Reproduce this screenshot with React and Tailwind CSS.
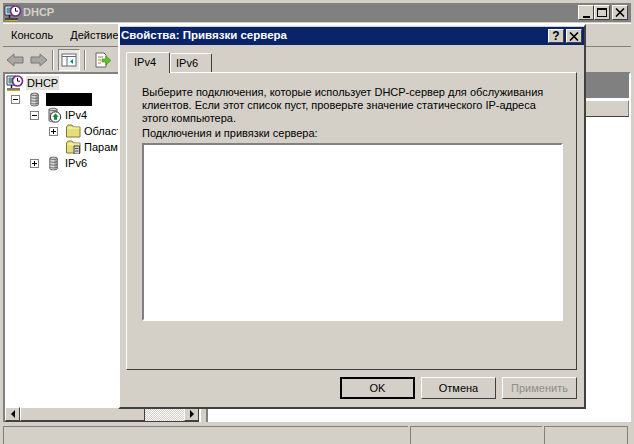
import React from 'react'

const raised = 'border border-t-white border-l-white border-r-[#404040] border-b-[#404040] bg-[#d4d0c8]'
const sunken = 'border-2 border-t-[#808080] border-l-[#808080] border-r-white border-b-white'

function ClockIcon({ className }) {
  return (
    <svg viewBox="0 0 18 16" className={className}>
      <path d="M1 1h9v9H1z" fill="#fff" stroke="#333" />
      <path d="M2.500 2.500h6v6h-6z" fill="#4f83cf" />
      <path d="M3 5l2-2 2 3-2 2z" fill="#55b06a" />
      <path d="M5.500 10v3" stroke="#222" strokeWidth="1.6" />
      <path d="M1 14h13" stroke="#222" strokeWidth="1.2" />
      <path d="M1 15.500h13" stroke="#c8b000" />
      <circle cx="11.500" cy="6" r="5" fill="#fff" stroke="#7a2a90" strokeWidth="1.7" />
      <path d="M11.500 3v3.200h2.500" fill="none" stroke="#111" />
    </svg>
  )
}

function ServerIcon({ badge, className }) {
  return (
    <svg viewBox="0 0 16 16" className={className}>
      <path d="M3 2.500C3 .8 11 .8 11 2.500v11c0 1.700-8 1.700-8 0z" fill="#d8d8d8" stroke="#5a5a5a" />
      <path d="M3 2.500c0 1.500 8 1.500 8 0" fill="none" stroke="#5a5a5a" />
      <path d="M3.500 6c2 1 5 1 7 0M3.500 9c2 1 5 1 7 0M3.500 12c2 1 5 1 7 0" fill="none" stroke="#6a6a6a" />
      <path d="M8 4h2.500v9.500H8z" fill="#000" opacity="0.22" />
      {badge && (
        <>
          <circle cx="9.500" cy="10" r="5.200" fill="#fff" stroke="#333" />
          <path d="M9.500 6.600l3.200 3.200H11v3H8v-3H6.300z" fill="#0b8a2e" />
        </>
      )}
    </svg>
  )
}

function FolderIcon({ server, className }) {
  return (
    <svg viewBox="0 0 16 14" className={className}>
      <path d="M1.500 3L3 1h4l1.500 2h6.500v10h-13.500z" fill="#e6df78" stroke="#7d7a3c" />
      <path d="M2.500 4h12" stroke="#fdf8c0" />
      {server && (
        <>
          <path d="M9 6h5.500v8H9z" fill="#d8d8d8" stroke="#444" />
          <path d="M10 8.500h3.500M10 11h3.500" stroke="#555" />
        </>
      )}
    </svg>
  )
}

function Expander({ sign }) {
  return (
    <span className="relative block h-[9px] w-[9px] border border-[#808080] bg-white">
      <span className="absolute left-[1px] top-[3px] h-[1px] w-[5px] bg-black" />
      {sign === '+' && <span className="absolute left-[3px] top-[1px] h-[5px] w-[1px] bg-black" />}
    </span>
  )
}

function TreeRow({ indent, sign, icon, children }) {
  return (
    <div className="flex h-4 items-center" style={{ paddingLeft: indent }}>
      <span className="flex w-[13px] shrink-0 justify-start">{sign && <Expander sign={sign} />}</span>
      <span className="mx-[3px] flex w-4 shrink-0 justify-center">{icon}</span>
      <span className="whitespace-nowrap">{children}</span>
    </div>
  )
}

function CloseGlyph() {
  return (
    <svg viewBox="0 0 10 9" className="h-[9px] w-[10px]">
      <path d="M1 0.500l8 8M9 0.500l-8 8" stroke="#000" strokeWidth="1.600" />
    </svg>
  )
}

function CaptionButton({ children, className }) {
  return (
    <span className={`${raised} grid place-items-center text-[12px] font-bold leading-none text-black ${className}`}>
      {children}
    </span>
  )
}

function DialogButton({ children, disabled, def }) {
  return (
    <button
      className={`flex h-[22px] w-[75px] items-center justify-center bg-[#d4d0c8] text-[11px] ${def ? 'border-2 border-black' : raised} ${disabled ? 'text-[#8f8d88]' : 'text-black'}`}
    >
      {children}
    </button>
  )
}

function ScrollArrow({ dir }) {
  return (
    <span className={`${raised} grid h-[14px] w-[15px] shrink-0 place-items-center`}>
      <svg viewBox="0 0 6 8" className="h-2 w-[6px]">
        <path d={dir === 'left' ? 'M5 0v8L1 4z' : 'M1 0v8l4-4z'} fill="#000" />
      </svg>
    </span>
  )
}

function Separator() {
  return <span className="h-[20px] w-[2px] shrink-0 border-l border-[#808080] bg-white" />
}

function PropertiesDialog() {
  return (
    <div className="absolute left-[118px] top-[24px] flex h-[385px] w-[468px] flex-col border-2 border-t-white border-l-white border-r-[#404040] border-b-[#404040] bg-[#d4d0c8]">
      <div className="mt-[1px] flex h-[18px] shrink-0 items-center justify-between bg-[#0a246a] pl-[1px] pr-[2px]">
        <span className="text-[11.500px] font-bold text-white">Свойства: Привязки сервера</span>
        <div className="flex gap-[2px]">
          <CaptionButton className="h-[14px] w-4">?</CaptionButton>
          <CaptionButton className="h-[14px] w-4"><CloseGlyph /></CaptionButton>
        </div>
      </div>

      <div className="ml-[6px] mt-[7px] flex items-end">
        <div className="relative z-10 -mb-[1px] flex h-[21px] w-[44px] items-center rounded-t-[2px] border border-b-0 border-t-white border-l-white border-r-[#404040] bg-[#d4d0c8] pb-[2px] pl-[7px] text-[11px]">
          IPv4
        </div>
        <div className="flex h-[19px] w-[42px] items-center rounded-t-[2px] border border-b-0 border-t-white border-l-white border-r-[#404040] bg-[#d4d0c8] pl-[5px] text-[11px]">
          IPv6
        </div>
      </div>

      <div className="ml-[6px] flex h-[298px] w-[451px] flex-col border border-t-white border-l-white border-r-[#404040] border-b-[#404040] pl-[15px] pt-[13px]">
        <p className="w-[420px] text-[11px] leading-[13px] text-black">
          Выберите подключения, которые использует DHCP-сервер для обслуживания клиентов. Если этот список пуст, проверьте значение статического IP-адреса этого компьютера.
        </p>
        <p className="mt-[2px] text-[11px] leading-[13px] text-black">Подключения и привязки сервера:</p>
        <div className={`${sunken} mt-[3px] h-[178px] w-[421px] bg-white`} />
      </div>

      <div className="mr-[7px] mt-[7px] flex justify-end gap-[6px]">
        <DialogButton def>OK</DialogButton>
        <DialogButton>Отмена</DialogButton>
        <DialogButton disabled>Применить</DialogButton>
      </div>
    </div>
  )
}

export default function App() {
  return (
    <div className="relative flex h-[444px] w-[634px] flex-col overflow-hidden bg-[#d4d0c8] pl-[3px] pr-[3px] pt-[3px] font-['Liberation_Sans',sans-serif] text-black">
      {/* main window caption */}
      <div className="flex h-[19px] shrink-0 items-center justify-between bg-[#808080] pl-[1px] pr-[3px]">
        <div className="flex items-center gap-[1px]">
          <ClockIcon className="h-4 w-[18px]" />
          <span className="text-[11px] font-bold text-[#d4d0c8]">DHCP</span>
        </div>
        <div className="flex">
          <CaptionButton className="h-[15px] w-4">
            <span className="mt-[8px] h-[2px] w-[7px] bg-black" />
          </CaptionButton>
          <CaptionButton className="h-[15px] w-4">
            <span className="h-[9px] w-[10px] border border-t-2 border-black" />
          </CaptionButton>
          <CaptionButton className="ml-[2px] h-[15px] w-4"><CloseGlyph /></CaptionButton>
        </div>
      </div>

      {/* menu */}
      <div className="mt-[1px] flex h-[23px] shrink-0 items-center gap-[17px] border-t border-white pl-[8px] text-[11px]">
        <span>Консоль</span>
        <span>Действие</span>
      </div>

      {/* toolbar */}
      <div className="flex h-[26px] shrink-0 items-center gap-[4px] border-t border-[#808080] pl-[3px]">
        <svg viewBox="0 0 42 16" className="h-4 w-[42px]">
          <path d="M1 8l7-6v3h9v6H8v3z" fill="#a8a8a0" stroke="#777" />
          <path d="M41 8l-7-6v3h-9v6h9v3z" fill="#a8a8a0" stroke="#777" />
        </svg>
        <Separator />
        <span className="grid h-[22px] w-[22px] shrink-0 place-items-center border border-t-[#808080] border-l-[#808080] border-r-white border-b-white bg-[#e8e6e0]">
          <svg viewBox="0 0 16 14" className="h-[14px] w-4">
            <rect x="1" y="1" width="14" height="12" fill="#fff" stroke="#667" />
            <path d="M1 3.500h14M6 4v9" stroke="#667" />
            <path d="M12 6l-3 2.500 3 2.500z" fill="#108a80" />
          </svg>
        </span>
        <Separator />
        <svg viewBox="0 0 18 16" className="ml-[4px] h-4 w-[18px] shrink-0">
          <path d="M2 1h8l2 2v12H2z" fill="#fff" stroke="#666" />
          <path d="M4 5h5M4 8h3M4 11h3" stroke="#a08020" />
          <path d="M8 7h4V4l5 4.500-5 4.500v-3H8z" fill="#63c02c" stroke="#3b8a1a" strokeWidth="0.6" />
        </svg>
      </div>

      {/* panes */}
      <div className="flex h-[350px] shrink-0 gap-[5px]">
        <div className={`${sunken} flex w-[198px] shrink-0 flex-col !border-b-0 bg-white`}>
          <div className="min-h-0 flex-1 pt-[1px] text-[11px]">
            <div className="flex h-4 items-center pl-[1px]">
              <ClockIcon className="h-4 w-[18px]" />
              <span className="ml-[2px] bg-[#e4e2dc] px-[1px] leading-[14px]">DHCP</span>
            </div>
            <TreeRow indent={6} sign="-" icon={<ServerIcon className="h-[15px] w-[15px]" />}>
              <span className="block h-[13px] w-[46px] bg-black" />
            </TreeRow>
            <TreeRow indent={25} sign="-" icon={<ServerIcon badge className="h-4 w-4" />}>IPv4</TreeRow>
            <TreeRow indent={44} sign="+" icon={<FolderIcon className="h-[14px] w-4" />}>Области</TreeRow>
            <TreeRow indent={44} icon={<FolderIcon server className="h-[14px] w-4" />}>Параметры</TreeRow>
            <TreeRow indent={25} sign="+" icon={<ServerIcon className="h-[15px] w-[15px]" />}>IPv6</TreeRow>
          </div>
          <div className="flex h-[15px] shrink-0 border-b border-[#404040] bg-[#d4d0c8]">
            <ScrollArrow dir="left" />
            <span className={`${raised} h-[14px] w-[125px]`} />
            <span className="h-[14px] flex-1 bg-[repeating-conic-gradient(#d4d0c8_0_25%,#ffffff_0_50%)] bg-[length:2px_2px]" />
            <ScrollArrow dir="right" />
          </div>
        </div>

        <div className={`${sunken} flex min-w-0 flex-1 flex-col !border-b-0 bg-white`}>
          <div className="h-[24px] shrink-0 bg-[#808080]" />
          <div className="mt-[2px] h-[17px] shrink-0 border border-t-white border-l-white border-r-[#808080] border-b-[#404040] bg-[#d4d0c8]" />
        </div>
      </div>

      {/* status bar */}
      <div className="mt-[4px] flex h-[18px] shrink-0 gap-[2px]">
        <span className="w-[405px] border-l border-t border-[#808080]" />
        <span className="w-[132px] border-l border-t border-[#808080]" />
        <span className="w-[84px] border-l border-r border-t border-[#808080]" />
      </div>

      <PropertiesDialog />
    </div>
  )
}
